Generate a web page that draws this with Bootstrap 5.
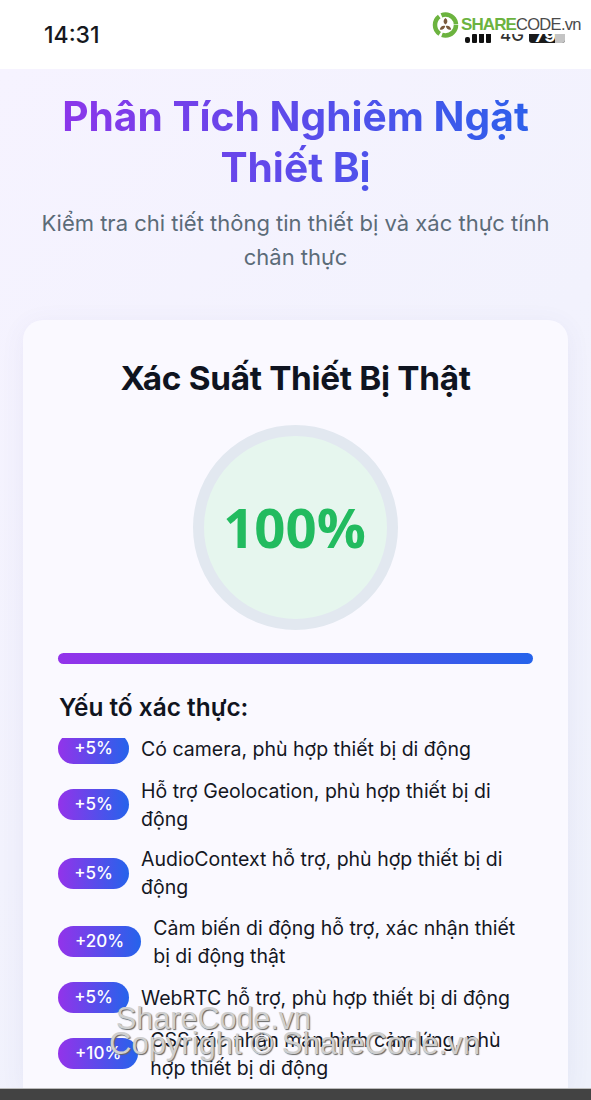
<!DOCTYPE html>
<html lang="vi">
<head>
<meta charset="utf-8">
<title>Phân Tích Nghiêm Ngặt Thiết Bị</title>
<link href="https://cdn.jsdelivr.net/npm/bootstrap@5.3.0/dist/css/bootstrap.min.css" rel="stylesheet">
<style>
html,body{height:100%;overflow:hidden}
body{font-family:Inter,"Noto Sans",sans-serif;color:#14171f;background:#fff}
.page-shell{height:1100px}
.status-row{height:69px;background:#fff;padding:22px 0 0 44px}
.clock{font-size:23px;font-weight:500;line-height:27px;color:#16181d}
.phone-icons{position:absolute;left:465px;top:27px;height:16px}
.net-label{font-size:17px;line-height:16px;color:#333;margin-left:8px;width:29px;font-weight:500}
.batt{width:36px;height:16px;background:#1a1a1a;border-radius:3px;color:#fff;font-size:18px;font-weight:700;line-height:18px;padding-left:5px;position:relative;overflow:hidden}
.batt::after{content:"";position:absolute;right:0;top:0;bottom:0;width:10px;background:#c4c4c4}
.site-logo{position:absolute;left:432px;top:11px}
.logo-text{font-family:"Liberation Sans",sans-serif;font-size:16.5px;line-height:18px;padding:4px 0 0 2px;letter-spacing:-.7px;color:#4a4a4a;background:#fff;align-self:flex-start}
.logo-text b{color:#6cb33f;font-weight:700;font-size:17px;letter-spacing:-.9px}
.main-area{background:linear-gradient(135deg,#f6f3ff,#eef1fb);padding:0 23px;min-height:0}
.hero-title{font-size:40.7px;line-height:51px;font-weight:700;margin:22px 0 0;background:linear-gradient(90deg,#9333ea,#2563eb);-webkit-background-clip:text;background-clip:text;color:transparent}
.hero-sub{font-size:22px;line-height:34px;color:#5b6b78;margin:13px 0 0}
.panel{margin-top:46px;background:#faf9ff;border-radius:20px 20px 0 0;padding:37px 35px 0;box-shadow:0 4px 24px rgba(90,80,160,.07);min-height:0}
.panel-title{font-size:33.3px;line-height:42px;font-weight:700;margin:0;color:#0f1420;letter-spacing:-.3px}
.gauge{width:205px;height:205px;border:11px solid #e2e8f0;border-radius:50%;background:#e6f6ee;margin:26px auto 0;padding-right:2px;font-family:"Open Sans",sans-serif;font-size:54.5px;font-weight:700;color:#22bb5f}
.meter{height:11px;border-radius:6px;background:linear-gradient(90deg,#9333ea,#2563eb);margin-top:23px}
.factor-head{font-size:24.4px;line-height:32px;font-weight:600;margin:27px 0 0 1px;color:#10141e}
.factor-list{margin-top:15px;gap:12.5px;min-height:0;overflow:hidden}
.factor-list .factor:first-child{margin-top:-5px}
.factor{gap:12px}
.pill{flex:none;min-width:71px;height:31px;padding:0 16px;border-radius:16px;background:linear-gradient(90deg,#9333ea,#2563eb);color:#fff;font-size:17px;font-weight:500;line-height:31px;text-align:center}
.pill-wide{padding:0 17px}
.factor-text{font-size:19.5px;line-height:28px;color:#14171f}
.base-bar{height:12px;background:#434343;flex:none;border-top:1px solid #bbb}
.stamp{position:absolute;left:0;width:591px;font-family:"Liberation Sans",sans-serif;font-size:30.5px;line-height:30px;color:#cfcfcf;text-shadow:1px 1px 1px #666;pointer-events:none}
.stamp-a{top:1003px;padding-left:116px}
.stamp-b{top:1029px;padding-left:109px;font-size:31px}
</style>
</head>
<body>
<div class="page-shell d-flex flex-column position-relative">
  <div class="status-row flex-shrink-0">
    <div class="clock">14:31</div>
  </div>
  <div class="main-area flex-grow-1 d-flex flex-column overflow-hidden">
    <h1 class="hero-title text-center">Phân Tích Nghiêm Ngặt Thiết Bị</h1>
    <p class="hero-sub text-center">Kiểm tra chi tiết thông tin thiết bị và xác thực tính chân thực</p>
    <div class="panel flex-grow-1 d-flex flex-column">
      <h2 class="panel-title text-center">Xác Suất Thiết Bị Thật</h2>
      <div class="gauge d-flex align-items-center justify-content-center flex-shrink-0">100%</div>
      <div class="meter flex-shrink-0"></div>
      <h3 class="factor-head">Yếu tố xác thực:</h3>
      <div class="factor-list d-flex flex-column flex-grow-1">
        <div class="factor d-flex align-items-center"><span class="pill">+5%</span><span class="factor-text">Có camera, phù hợp thiết bị di động</span></div>
        <div class="factor d-flex align-items-center"><span class="pill">+5%</span><span class="factor-text">Hỗ trợ Geolocation, phù hợp thiết bị di động</span></div>
        <div class="factor d-flex align-items-center"><span class="pill">+5%</span><span class="factor-text">AudioContext hỗ trợ, phù hợp thiết bị di động</span></div>
        <div class="factor d-flex align-items-center"><span class="pill pill-wide">+20%</span><span class="factor-text">Cảm biến di động hỗ trợ, xác nhận thiết bị di động thật</span></div>
        <div class="factor d-flex align-items-center"><span class="pill">+5%</span><span class="factor-text">WebRTC hỗ trợ, phù hợp thiết bị di động</span></div>
        <div class="factor d-flex align-items-center"><span class="pill pill-wide">+10%</span><span class="factor-text">CSS xác nhận màn hình cảm ứng, phù hợp thiết bị di động</span></div>
      </div>
    </div>
  </div>
  <div class="base-bar"></div>

  <div class="phone-icons d-flex align-items-end">
    <svg width="27" height="11" viewBox="0 0 27 11"><rect x="0" y="5" width="5" height="6" rx="2" fill="#111"/><rect x="7" y="2" width="5" height="9" rx="1" fill="#111"/><rect x="14" y="0" width="5" height="11" rx="1" fill="#111"/><rect x="21" y="0" width="5" height="11" rx="1" fill="#111"/></svg>
    <span class="net-label">4G</span>
    <span class="batt">79</span>
  </div>
  <div class="site-logo d-flex align-items-center">
    <svg width="27" height="28" viewBox="0 0 27 28"><circle cx="13.5" cy="14" r="10.500" fill="none" stroke="#6cb33f" stroke-width="4.5" stroke-dasharray="20 2.5"/><path d="M13.5 7c2.4 2 2.600 4.600 0 6.600-2.600-2-2.400-4.600 0-6.600zM7.800 18.600c.5-3 2.700-4.400 5.400-3.600-.4 3-3 4.500-5.400 3.600zM19.200 18.600c-2.400.9-5-.6-5.400-3.600 2.700-.8 4.900.6 5.400 3.600z" fill="#7a5a3c"/></svg>
    <span class="logo-text"><b>SHARE</b>CODE.vn</span>
  </div>
  <div class="stamp stamp-a">ShareCode.vn</div>
  <div class="stamp stamp-b">Copyright © ShareCode.vn</div>
</div>
<script src="https://cdn.jsdelivr.net/npm/bootstrap@5.3.0/dist/js/bootstrap.bundle.min.js"></script>
</body>
</html>
